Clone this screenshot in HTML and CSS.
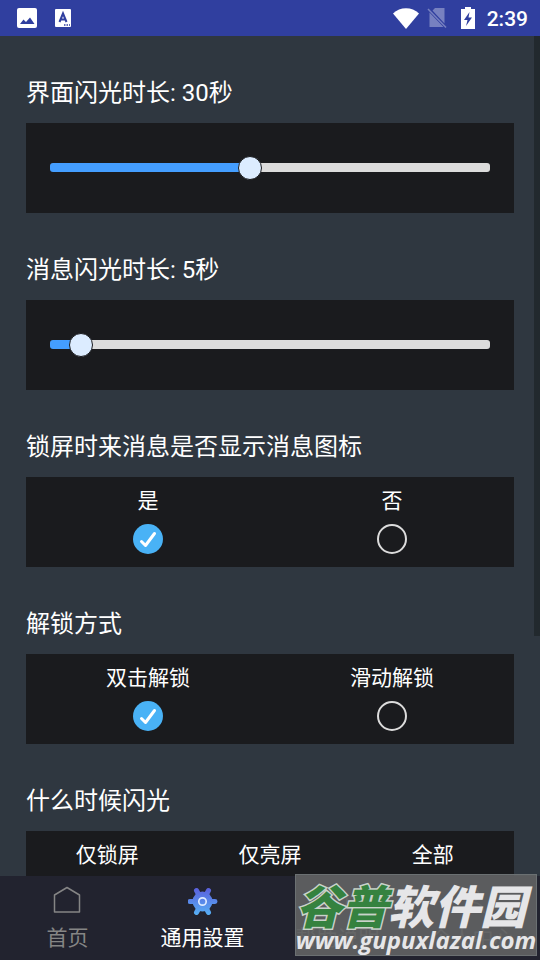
FILE: index.html
```html
<!DOCTYPE html>
<html lang="zh-CN">
<head>
    <meta charset="UTF-8">
    <meta name="viewport" content="width=device-width, initial-scale=1.0">
    <title>通用設置</title>
    <link rel="stylesheet" href="styles.css">
</head>
<body>
    <header class="status">
        <svg width="20" height="20" viewBox="0 0 20 20">
            <rect width="20" height="20" rx="2" fill="#fff"/>
            <path d="M3 16l3.500-4.500 2.500 2.500 4-4.500 4.500 6.500z" fill="#303f9f"/>
        </svg>
        <svg width="16" height="18" viewBox="0 0 16 18">
            <rect width="16" height="18" rx="1" fill="#fff"/>
            <path d="M4.500 13L8 4.500l3.500 8.500M6 10.500h4" fill="none" stroke="#303f9f" stroke-width="2"/>
            <path d="M9 16h6" stroke="#303f9f" stroke-width="1.500" stroke-dasharray="1.500 1"/>
        </svg>
        <div class="status-right">
            <svg width="26" height="21" viewBox="0 0 26 21">
                <path d="M0 5.500C7-1.500 19-1.500 26 5.500L13 21z" fill="#fff"/>
            </svg>
            <svg width="22" height="22" viewBox="0 0 22 22">
                <path d="M8 1h9.500v15.500L5.500 3.500zM2.500 5.500L16.500 20H2.500z" fill="#7781c0"/>
                <path d="M1 2l18 18.500" stroke="#7781c0" stroke-width="1.500"/>
            </svg>
            <svg width="14" height="22" viewBox="0 0 14 22">
                <path d="M4 0h6v2h4v20H0V2h4z" fill="#fff"/>
                <path d="M8.500 5L3 13h3.500L5 19l6-8.500H7.500z" fill="#303f9f"/>
            </svg>
            <span class="time">2:39</span>
        </div>
    </header>

    <main class="settings">
        <section class="group">
            <label class="title" for="screenTime">界面闪光时长: 30秒</label>
            <div class="panel slider">
                <input type="range" id="screenTime" min="2" max="64" value="30" style="--value: 0.4516">
            </div>
        </section>
        <section class="group">
            <label class="title" for="messageTime">消息闪光时长: 5秒</label>
            <div class="panel slider">
                <input type="range" id="messageTime" min="1" max="90" value="5" style="--value: 0.0449">
            </div>
        </section>
        <section class="group">
            <h2 class="title">锁屏时来消息是否显示消息图标</h2>
            <div class="panel options">
                <label class="option">是
                    <span class="radio">
                        <input type="radio" name="icon" checked>
                        <svg viewBox="0 0 30 30"><path d="M8.500 17.500l4 4L21.500 9.500"/></svg>
                    </span>
                </label>
                <label class="option">否
                    <span class="radio"><input type="radio" name="icon"></span>
                </label>
            </div>
        </section>
        <section class="group">
            <h2 class="title">解锁方式</h2>
            <div class="panel options">
                <label class="option">双击解锁
                    <span class="radio">
                        <input type="radio" name="unlock" checked>
                        <svg viewBox="0 0 30 30"><path d="M8.500 17.500l4 4L21.500 9.500"/></svg>
                    </span>
                </label>
                <label class="option">滑动解锁
                    <span class="radio"><input type="radio" name="unlock"></span>
                </label>
            </div>
        </section>
        <section class="group">
            <h2 class="title">什么时候闪光</h2>
            <div class="panel options">
                <label class="option">仅锁屏
                    <span class="radio"><input type="radio" name="when"></span>
                </label>
                <label class="option">仅亮屏
                    <span class="radio"><input type="radio" name="when"></span>
                </label>
                <label class="option">全部
                    <span class="radio"><input type="radio" name="when"></span>
                </label>
            </div>
        </section>
        <div class="scrollbar"></div>
    </main>

    <nav class="tabs">
        <a class="tab" href="#home">
            <svg width="30" height="30" viewBox="0 0 30 30">
                <path d="M14 1.500L26.500 9V26H1.500V9z" fill="none" stroke="#858585" stroke-width="1.500" stroke-linejoin="round"/>
            </svg>
            首页
        </a>
        <a class="tab active" href="#settings">
            <svg width="30" height="30" viewBox="0 0 30 30">
                <defs>
                    <linearGradient id="gear" gradientUnits="userSpaceOnUse" x1="0" y1="2" x2="0" y2="29">
                        <stop offset="0" stop-color="#5b5fdc"/>
                        <stop offset="1" stop-color="#56b0f5"/>
                    </linearGradient>
                </defs>
                <g stroke="url(#gear)" stroke-width="5" stroke-linecap="round">
                    <path d="M2 15.600L27 15.400M8.500 4.500L20.500 26.500M20.500 4.500L8.500 26.500"/>
                </g>
                <circle cx="14.500" cy="15.500" r="10" fill="url(#gear)"/>
                <circle cx="14.500" cy="15.500" r="3.700" fill="none" stroke="#dceaff" stroke-width="1.700"/>
            </svg>
            通用設置
        </a>
        <a class="tab" href="#help">
            <svg width="30" height="30" viewBox="0 0 30 30">
                <circle cx="14" cy="14" r="10" fill="none" stroke="#858585" stroke-width="1.500"/>
            </svg>
            帮助说明
        </a>
        <a class="tab" href="#me">
            <svg width="30" height="30" viewBox="0 0 30 30">
                <circle cx="15" cy="9" r="6" fill="none" stroke="#858585" stroke-width="1.500"/>
                <path d="M4 27c0-14 22-14 22 0" fill="none" stroke="#858585" stroke-width="1.500"/>
            </svg>
            个人中心
        </a>
    </nav>

    <div class="watermark">
        <div class="brand"><span class="green">谷普</span>软件园</div>
        <div class="site">www.gupuxlazal.com</div>
    </div>
</body>
</html>
```

FILE: styles.css
```css
* {
    box-sizing: border-box;
}
body {
    margin: 0;
    height: 100vh;
    display: flex;
    flex-direction: column;
    position: relative;
    font-family: Roboto, "Noto Sans CJK SC", sans-serif;
    color: #fff;
    background-color: #2f3740;
}
.status {
    flex: none;
    display: flex;
    align-items: center;
    gap: 18px;
    height: 36px;
    padding: 0 12px 0 17px;
    background-color: #303f9f;
}
.status-right {
    display: flex;
    align-items: center;
    gap: 12px;
    margin-left: auto;
}
.status-right svg:first-child {
    margin-right: -4px;
}
.time {
    font-size: 21px;
    font-weight: 500;
    line-height: 34px;
    padding-top: 2px;
}
.settings {
    flex: 1;
    min-height: 0;
    padding: 0 26px;
    overflow-y: auto;
    scrollbar-width: none;
    position: relative;
}
.scrollbar {
    position: absolute;
    top: 0;
    right: 0;
    width: 6px;
    height: 600px;
    background-color: #22292e;
}
.group {
    padding-top: 39px;
}
.title {
    display: block;
    margin: 0 0 12px;
    font-size: 24px;
    font-weight: 400;
    line-height: 36px;
}
.panel {
    height: 90px;
    background-color: #1a1b1e;
}
.slider {
    display: flex;
    align-items: center;
    padding: 0 24px 1px;
}
input[type="range"] {
    appearance: none;
    width: 100%;
    height: 9px;
    margin: 0;
    border-radius: 3px;
    background: linear-gradient(to right, #449eff calc(12px + (100% - 24px) * var(--value)), #dcdcdc 0);
}
input[type="range"]::-webkit-slider-thumb {
    appearance: none;
    width: 24px;
    height: 24px;
    border: 1px solid #1a1b1e;
    border-radius: 50%;
    background-color: #dcecff;
}
.options {
    display: flex;
}
.option {
    flex: 1;
    display: flex;
    flex-direction: column;
    align-items: center;
    gap: 8px;
    padding-top: 9px;
    font-size: 21px;
    line-height: 30px;
}
.radio {
    display: grid;
    width: 30px;
    height: 30px;
}
.radio input,
.radio svg {
    grid-area: 1 / 1;
    width: 30px;
    height: 30px;
    margin: 0;
}
.radio input {
    appearance: none;
    border: 2px solid #dcdcdc;
    border-radius: 50%;
}
.radio input:checked {
    border: none;
    background-color: #49b2f6;
}
.radio svg {
    pointer-events: none;
    fill: none;
    stroke: #fff;
    stroke-width: 3;
    stroke-linecap: round;
    stroke-linejoin: round;
}
.tabs {
    flex: none;
    display: flex;
    height: 84px;
    background-color: #22232f;
}
.tab {
    flex: 1;
    display: flex;
    flex-direction: column;
    align-items: center;
    gap: 7px;
    padding-top: 10px;
    font-size: 21px;
    line-height: 30px;
    color: #858585;
    text-decoration: none;
}
.tab.active {
    color: #fff;
}
.watermark {
    position: absolute;
    right: 3px;
    bottom: 4px;
    width: 242px;
    height: 82px;
    border: 1px solid #6b7072;
    background-color: rgba(98, 99, 100, 0.9);
    color: #e6e6e8;
    font-style: italic;
    white-space: nowrap;
}
.brand {
    font-family: "Noto Sans CJK SC", sans-serif;
    font-size: 46px;
    font-weight: 900;
    line-height: 50px;
    padding-top: 4px;
}
.green {
    color: #35823f;
    -webkit-text-stroke: 3px #c9d3ca;
    paint-order: stroke fill;
}
.site {
    display: flex;
    justify-content: center;
    font-family: "Open Sans", sans-serif;
    font-size: 24px;
    font-weight: 700;
    line-height: 22px;
}
```
